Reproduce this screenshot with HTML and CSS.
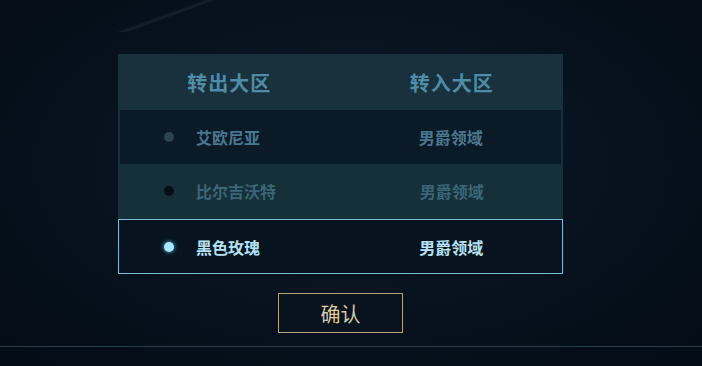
FILE: index.html
```html
<!DOCTYPE html>
<html lang="zh-CN">
<head>
    <meta charset="UTF-8">
    <title>大区转移</title>
    <link rel="stylesheet" href="styles.css">
</head>
<body>
    <div class="page">
        <!-- 大区列表 -->
        <div class="server-panel">
            <div class="panel-head">
                <div class="col">转出大区</div>
                <div class="col">转入大区</div>
            </div>
            <div class="server-row row-dark">
                <div class="col col-from"><span class="dot dot-gray"></span>艾欧尼亚</div>
                <div class="col">男爵领域</div>
            </div>
            <div class="server-row row-light">
                <div class="col col-from"><span class="dot dot-black"></span>比尔吉沃特</div>
                <div class="col">男爵领域</div>
            </div>
            <div class="server-row row-active">
                <div class="col col-from"><span class="dot dot-on"></span>黑色玫瑰</div>
                <div class="col">男爵领域</div>
            </div>
        </div>

        <div class="actions">
            <button class="btn-confirm">确认</button>
        </div>
        <div class="footer-line"></div>
    </div>
</body>
</html>
```

FILE: styles.css
```css
body {
    margin: 0;
    font-family: "Noto Sans CJK SC", "Noto Sans", sans-serif;
    background-color: #06111d;
    background-image:
        linear-gradient(160deg, transparent 0%, transparent 46%, rgba(120, 160, 190, 0.12) 49%, transparent 52%, transparent 100%),
        radial-gradient(ellipse at 50% 45%, #0b1c29 0%, #06111d 60%, #040c16 100%);
    background-size: 140px 40px, 100% 100%;
    background-position: 110px -8px, 0 0;
    background-repeat: no-repeat;
    height: 366px;
    overflow: hidden;
}
.page {
    padding-top: 54px;
}
.server-panel {
    width: 445px;
    margin-left: 118px;
    background: #172f3a;
}
.panel-head,
.server-row {
    display: grid;
    grid-template-columns: 1fr 1fr;
    align-items: center;
}
.panel-head {
    height: 56px;
    background: #18313c;
    color: #4f8ca8;
    font-size: 20px;
    font-weight: bold;
    letter-spacing: 1px;
}
.col {
    text-align: center;
}
.server-row {
    height: 54px;
    font-size: 16px;
    font-weight: bold;
}
.col-from {
    text-align: left;
    padding-left: 46px;
    display: flex;
    align-items: center;
}
.row-dark {
    background: #0a1b27;
    color: #4a7790;
    margin: 0 2px;
}
.row-dark .col-from {
    padding-left: 44px;
}
.row-light {
    background: #163039;
    color: #3a6676;
}
.row-active {
    background: #07141f;
    color: #b6e2f3;
    border: 1px solid #7cbcd4;
    height: 53px;
    margin-top: 1px;
}
.row-active .col-from {
    padding-left: 45px;
}
.dot {
    width: 10px;
    height: 10px;
    border-radius: 50%;
    margin-right: 22px;
}
.dot-gray {
    background: #2c4450;
}
.dot-black {
    background: #050e16;
}
.dot-on {
    background: #a6e8ff;
    box-shadow: 0 0 4px #4fc3f0;
}
.actions {
    width: 445px;
    margin-left: 118px;
    display: flex;
    justify-content: center;
    margin-top: 19px;
}
.btn-confirm {
    width: 125px;
    height: 40px;
    background: #07131f;
    border: 1px solid #b6a47c;
    color: #dccca4;
    font-family: "Noto Sans CJK SC", sans-serif;
    font-size: 20px;
    cursor: pointer;
}
.footer-line {
    margin-top: 13px;
    height: 1px;
    background: #263e4c;
}
```
